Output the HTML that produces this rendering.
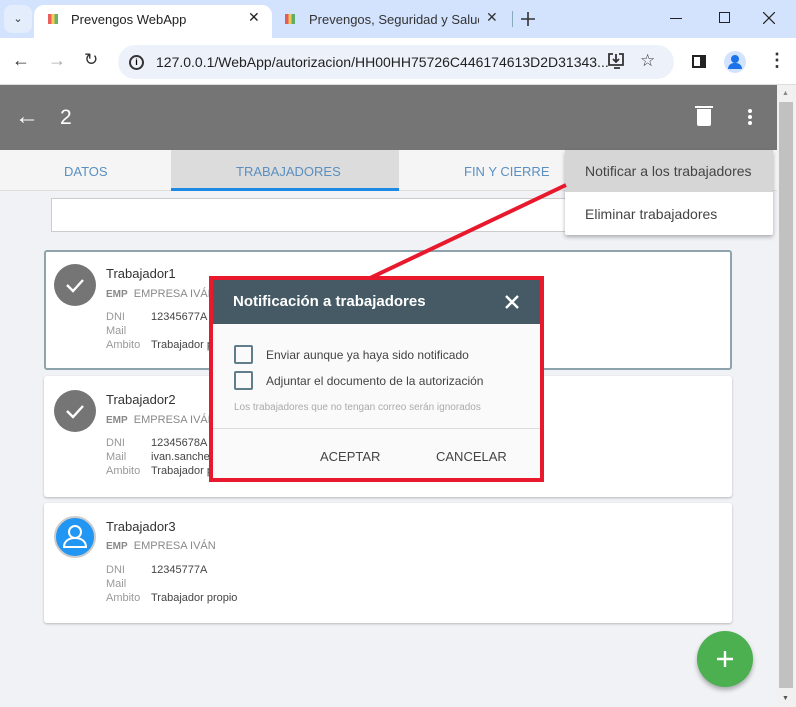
<!DOCTYPE html>
<html><head><meta charset="utf-8"><style>
*{box-sizing:border-box;margin:0;padding:0}
body{width:796px;height:707px;overflow:hidden;font-family:"Liberation Sans",sans-serif;background:#f1f2f6;position:relative}
.abs{position:absolute}
.t{font-size:13px;color:#333}
</style></head><body>
<div class="abs" style="left:0;top:0;width:796px;height:38px;background:#d3e3fd"></div>
<div class="abs" style="left:4px;top:5px;width:28px;height:28px;background:#e4edfc;border-radius:8px;text-align:center;line-height:28px;font-size:11px;color:#333">&#8964;</div>
<div class="abs" style="left:34px;top:5px;width:238px;height:34px;background:#fff;border-radius:10px 10px 0 0"></div>
<div class="abs" style="left:48px;top:14px;width:10px;height:10px;background:linear-gradient(90deg,#e53935 33%,#fbc02d 33% 66%,#43a047 66%);opacity:.8"></div>
<div class="abs" style="left:71px;top:12px;font-size:13px;color:#222">Prevengos WebApp</div>
<div class="abs" style="top:9px;font-size:14px;color:#222;left:248px">✕</div>
<div class="abs" style="left:285px;top:14px;width:10px;height:10px;background:linear-gradient(90deg,#e53935 33%,#fbc02d 33% 66%,#43a047 66%);opacity:.8"></div>
<div class="abs" style="left:309px;top:12px;font-size:13px;color:#333;width:170px;overflow:hidden;white-space:nowrap">Prevengos, Seguridad y Salud L</div>
<div class="abs" style="left:486px;top:9px;font-size:14px;color:#333">✕</div>
<div class="abs" style="left:512px;top:11px;width:1px;height:16px;background:#8ab"></div>
<svg class="abs" style="left:521px;top:12px" width="14" height="14"><path d="M7 0v14M0 7h14" stroke="#333" stroke-width="1.6"/></svg>
<div class="abs" style="left:670px;top:18px;width:12px;height:1px;background:#222"></div>
<div class="abs" style="left:719px;top:12px;width:11px;height:11px;border:1px solid #222"></div>
<svg class="abs" style="left:763px;top:12px" width="12" height="12"><path d="M0 0L12 12M12 0L0 12" stroke="#222" stroke-width="1.2"/></svg>
<div class="abs" style="left:0;top:38px;width:796px;height:47px;background:#fff;border-bottom:1px solid #ddd"></div>
<div class="abs" style="left:12px;top:50px;font-size:18px;color:#333">←</div>
<div class="abs" style="left:48px;top:50px;font-size:18px;color:#aaa">→</div>
<div class="abs" style="left:84px;top:50px;font-size:17px;color:#333">↻</div>
<div class="abs" style="left:118px;top:45px;width:556px;height:34px;background:#edf2fa;border-radius:17px"></div>
<div class="abs" style="left:129px;top:55px;width:15px;height:15px;border:2px solid #333;border-radius:50%;font-size:9px;text-align:center;line-height:11px;font-weight:bold">i</div>
<div class="abs" style="left:156px;top:54px;font-size:14px;color:#222">127.0.0.1/WebApp/autorizacion/HH00HH75726C446174613D2D31343...</div>
<svg class="abs" style="left:607px;top:52px" width="20" height="18"><path d="M6 2H2v11h14V2h-4M9 2v8M6 7l3 3 3-3M7 16h6" fill="none" stroke="#333" stroke-width="1.8"/></svg>
<div class="abs" style="left:640px;top:51px;font-size:17px;color:#333">☆</div>
<div class="abs" style="left:692px;top:55px;width:14px;height:13px;border:2px solid #222;border-right-width:6px"></div>
<div class="abs" style="left:724px;top:51px;width:22px;height:22px;background:#d3e3fd;border-radius:50%"></div>
<div class="abs" style="left:731px;top:55px;width:8px;height:8px;background:#1a73e8;border-radius:50%"></div>
<div class="abs" style="left:728px;top:63px;width:14px;height:6px;background:#1a73e8;border-radius:7px 7px 0 0"></div>
<div class="abs" style="left:768px;top:50px;font-size:18px;color:#333;font-weight:bold">⋮</div>
<div class="abs" style="left:0;top:85px;width:777px;height:65px;background:#757575"></div>
<div class="abs" style="left:15px;top:103px;font-size:24px;color:#fff">←</div>
<div class="abs" style="left:60px;top:106px;font-size:21px;color:#fff">2</div>
<div class="abs" style="left:697px;top:109px;width:14px;height:17px;background:#fff;border-radius:0 0 2px 2px"></div>
<div class="abs" style="left:695px;top:106px;width:18px;height:2px;background:#fff"></div>
<div class="abs" style="left:748px;top:109px;width:4px;height:4px;background:#fff;border-radius:50%;box-shadow:0 6px 0 #fff,0 12px 0 #fff"></div>
<div class="abs" style="left:0;top:150px;width:777px;height:41px;background:#f5f5f5;border-bottom:1px solid #ddd"></div>
<div class="abs" style="left:171px;top:150px;width:228px;height:41px;background:#dcdcdc;border-bottom:3px solid #1e88e5"></div>
<div class="abs" style="left:64px;top:164px;font-size:13px;color:#5b8fc0">DATOS</div>
<div class="abs" style="left:236px;top:164px;font-size:13px;color:#5b8fc0">TRABAJADORES</div>
<div class="abs" style="left:464px;top:164px;font-size:13px;color:#5b8fc0">FIN Y CIERRE</div>
<div class="abs" style="left:51px;top:198px;width:540px;height:34px;background:#fff;border:1px solid #ccc"></div>
<div class="abs" style="left:44px;top:250px;width:688px;height:120px;background:#fff;border:2px solid #8fa3ad;border-radius:3px"></div>
<div class="abs" style="left:44px;top:376px;width:688px;height:121px;background:#fff;box-shadow:0 1px 2px rgba(0,0,0,.25);border-radius:3px"></div>
<div class="abs" style="left:44px;top:503px;width:688px;height:120px;background:#fff;box-shadow:0 1px 2px rgba(0,0,0,.25);border-radius:3px"></div>
<svg class="abs" style="left:54px;top:264px" width="42" height="42"><circle cx="21" cy="21" r="21" fill="#757575"/><path d="M13 21l6 6 10-11" fill="none" stroke="#fff" stroke-width="2.4"/></svg>
<svg class="abs" style="left:54px;top:390px" width="42" height="42"><circle cx="21" cy="21" r="21" fill="#757575"/><path d="M13 21l6 6 10-11" fill="none" stroke="#fff" stroke-width="2.4"/></svg>
<div class="abs" style="left:54px;top:516px;width:42px;height:42px;background:#2196f3;border-radius:50%;border:2px solid #ccc"></div>
<svg class="abs" style="left:54px;top:516px" width="42" height="42" viewBox="0 0 42 42"><circle cx="21" cy="16" r="6" fill="none" stroke="#fff" stroke-width="2"/><path d="M10 31c0-6 5-9 11-9s11 3 11 9H10z" fill="none" stroke="#fff" stroke-width="2"/></svg>
<div class="abs t" style="left:106px;top:266px">Trabajador1</div>
<div class="abs" style="left:106px;top:288px;font-size:11px;color:#888"><b style="font-size:10px">EMP</b>&nbsp; EMPRESA IVÁN</div>
<div class="abs" style="left:106px;top:310px;font-size:11px;color:#999;line-height:14px">DNI<br>Mail<br>Ambito</div>
<div class="abs" style="left:151px;top:310px;font-size:11px;color:#444;line-height:14px">12345677A<br><br>Trabajador propio</div>
<div class="abs t" style="left:106px;top:392px">Trabajador2</div>
<div class="abs" style="left:106px;top:414px;font-size:11px;color:#888"><b style="font-size:10px">EMP</b>&nbsp; EMPRESA IVÁN</div>
<div class="abs" style="left:106px;top:436px;font-size:11px;color:#999;line-height:14px">DNI<br>Mail<br>Ambito</div>
<div class="abs" style="left:151px;top:436px;font-size:11px;color:#444;line-height:14px">12345678A<br>ivan.sanchez<br>Trabajador propio</div>
<div class="abs t" style="left:106px;top:519px">Trabajador3</div>
<div class="abs" style="left:106px;top:540px;font-size:11px;color:#888"><b style="font-size:10px">EMP</b>&nbsp; EMPRESA IVÁN</div>
<div class="abs" style="left:106px;top:563px;font-size:11px;color:#999;line-height:14px">DNI<br>Mail<br>Ambito</div>
<div class="abs" style="left:151px;top:563px;font-size:11px;color:#444;line-height:14px">12345777A<br><br>Trabajador propio</div>
<div class="abs" style="left:565px;top:150px;width:208px;height:85px;background:#fff;box-shadow:0 2px 4px rgba(0,0,0,.3);border-radius:2px"></div>
<div class="abs" style="left:565px;top:150px;width:208px;height:42px;background:#d6d6d6"></div>
<div class="abs" style="left:585px;top:163px;font-size:14px;color:#444">Notificar a los trabajadores</div>
<div class="abs" style="left:585px;top:206px;font-size:14px;color:#444">Eliminar trabajadores</div>
<svg class="abs" style="left:0;top:0" width="796" height="707"><line x1="566" y1="185" x2="368" y2="279" stroke="#e8192c" stroke-width="4"/></svg>
<div class="abs" style="left:209px;top:276px;width:335px;height:206px;border:4px solid #e8192c;background:#fafafa"></div>
<div class="abs" style="left:213px;top:280px;width:327px;height:44px;background:#455a64"></div>
<div class="abs" style="left:233px;top:293px;font-size:15px;color:#fff;font-weight:bold">Notificación a trabajadores</div>
<svg class="abs" style="left:505px;top:295px" width="14" height="14"><path d="M1 1L13 13M13 1L1 13" stroke="#fff" stroke-width="2.4"/></svg>
<div class="abs" style="left:234px;top:345px;width:19px;height:19px;border:2px solid #607d8b;border-radius:2px"></div>
<div class="abs" style="left:234px;top:371px;width:19px;height:19px;border:2px solid #607d8b;border-radius:2px"></div>
<div class="abs" style="left:266px;top:348px;font-size:12px;color:#444">Enviar aunque ya haya sido notificado</div>
<div class="abs" style="left:266px;top:374px;font-size:12px;color:#444">Adjuntar el documento de la autorización</div>
<div class="abs" style="left:234px;top:402px;font-size:10px;color:#aaa">Los trabajadores que no tengan correo serán ignorados</div>
<div class="abs" style="left:213px;top:428px;width:327px;height:1px;background:#ddd"></div>
<div class="abs" style="left:320px;top:449px;font-size:13px;color:#444">ACEPTAR</div>
<div class="abs" style="left:436px;top:449px;font-size:13px;color:#444">CANCELAR</div>
<div class="abs" style="left:777px;top:85px;width:19px;height:622px;background:#f1f1f1"></div>
<div class="abs" style="left:779px;top:102px;width:14px;height:586px;background:#c1c1c1"></div>
<div class="abs" style="left:782px;top:90px;font-size:7px;color:#888">▲</div>
<div class="abs" style="left:782px;top:695px;font-size:7px;color:#555">▼</div>
<div class="abs" style="left:697px;top:631px;width:56px;height:56px;background:#4caf50;border-radius:50%;box-shadow:0 3px 5px rgba(0,0,0,.3)"></div>
<svg class="abs" style="left:717px;top:651px" width="16" height="16"><path d="M8 0v16M0 8h16" stroke="#fff" stroke-width="2.4"/></svg>
</body></html>
